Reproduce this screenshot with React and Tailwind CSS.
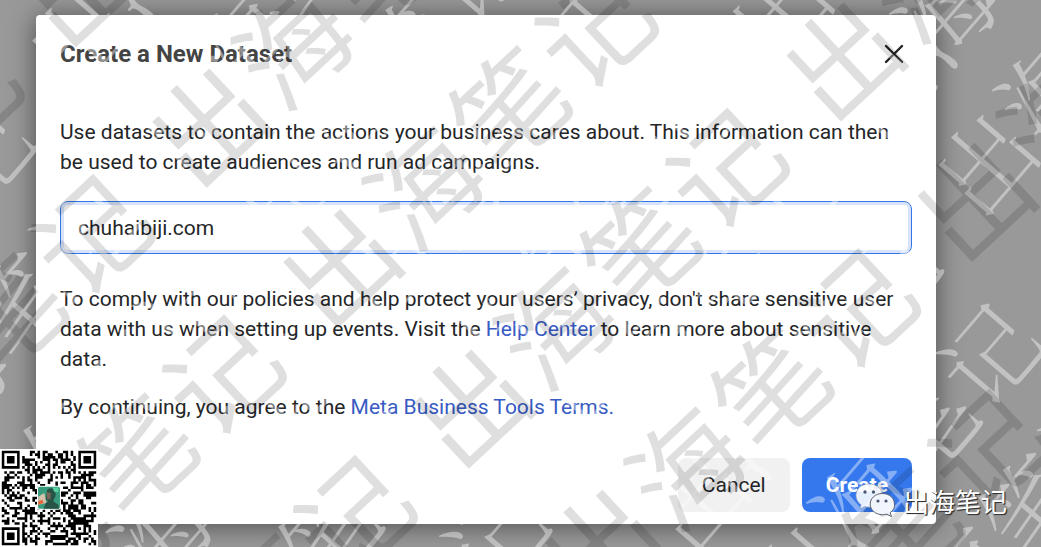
import React from "react";

const MARK = "出海笔记";

function tile(angle, origin, period, row, shift, cols, rows) {
  const rad = (angle * Math.PI) / 180;
  const marks = [];
  for (let r = rows[0]; r <= rows[1]; r++) {
    for (let c = cols[0]; c <= cols[1]; c++) {
      const x = c * period + r * shift;
      const y = r * row;
      const px = origin[0] + x * Math.cos(rad) + y * Math.sin(rad);
      const py = origin[1] - x * Math.sin(rad) + y * Math.cos(rad);
      if (px > -340 && px < 1110 && py > -70 && py < 880) marks.push({ key: r + ":" + c, x, y });
    }
  }
  return { transform: `translate(${origin[0]} ${origin[1]}) rotate(${-angle})`, marks };
}

function glyphStarts(x, step) {
  return [0, 1, 2, 3].map((i) => x + i * step).join(" ");
}

function Watermark() {
  const dark = tile(43, [471, 406], 509, 192, 0, [-2, 2], [-4, 4]);
  const light = tile(49.3, [986, 164], 443, 128, 9, [-4, 2], [-8, 8]);
  return (
    <svg aria-hidden="true" className="pointer-events-none absolute inset-0 h-full w-full select-none">
      <g transform={light.transform} className="fill-white text-[96px] font-light opacity-[0.4] [font-family:'Noto_Serif_CJK_SC','Noto_Sans_CJK_SC',serif]">
        {light.marks.map((m) => (
          <text key={m.key} x={glyphStarts(m.x - 48, 97)} y={m.y + 36}>{MARK}</text>
        ))}
      </g>
      <g transform={dark.transform} className="fill-black text-[111px] opacity-[0.12] [font-family:'Noto_Sans_CJK_SC',sans-serif]">
        {dark.marks.map((m) => (
          <text key={m.key} x={glyphStarts(m.x - 56, 116)} y={m.y + 42}>{MARK}</text>
        ))}
      </g>
    </svg>
  );
}

const N = 37;
function finder(x, y) {
  const d = Math.max(Math.abs(x - 3), Math.abs(y - 3));
  return d === 3 || d <= 1;
}
function isOn(x, y) {
  if (x < 8 && y < 8) return x < 7 && y < 7 && finder(x, y);
  if (x > N - 9 && y < 8) return x > N - 8 && y < 7 && finder(x - N + 7, y);
  if (x < 8 && y > N - 9) return x < 7 && y > N - 8 && finder(x, y - N + 7);
  const a = Math.max(Math.abs(x - 30), Math.abs(y - 30));
  if (a <= 2) return a !== 1;
  if (x === 6 || y === 6) return (x + y) % 2 === 0;
  let h = (x * 374761393 + y * 668265263) | 0;
  h = Math.imul(h ^ (h >>> 13), 1274126177);
  return ((h ^ (h >>> 16)) & 1) === 1;
}

function QrCode() {
  let d = "";
  for (let y = 0; y < N; y++) for (let x = 0; x < N; x++) if (isOn(x, y)) d += `M${x} ${y}h1v1h-1z`;
  return (
    <svg role="img" aria-label="QR code" viewBox="-0.7 -0.7 38.4 38.4" className="absolute bottom-0 left-0 size-[98px] bg-white">
      <path d={d} fill="#000" />
      <rect x="13.8" y="13.7" width="9.4" height="9.4" rx="1" fill="#fff" />
      <rect x="14.2" y="14.1" width="8.6" height="8.6" rx=".7" fill="#399b7d" />
      <path d="M14.3 18l2.3-1.5 1 4-3.3.6z" fill="#d5c2ad" />
      <path d="M14.3 19.8l1.6-.6.5 1.3-2.1.6z" fill="#e5643c" />
      <path d="M17.8 15.2q2-1.2 3.2.3l.1 2.2-1 2 2 1.400.3 1.600h-6l.8-2.200 1-.6-1-.8z" fill="#285447" />
      <path d="M17.500 16.300l1.700.2-.1 2.400-1.300.2z" fill="#7d6659" />
      <path d="M19.800 14.400h2.400v1.700h-1.600z" fill="#55d2a0" />
    </svg>
  );
}

function AccountBadge() {
  return (
    <div className="absolute right-[34px] bottom-[28px] flex items-center gap-2">
      <svg aria-hidden="true" viewBox="0 0 42 36" className="h-9 w-[42px]">
        <g fill="#fff" fillOpacity=".88" stroke="#59606d" strokeWidth="1">
          <path stroke="#8b97b5" strokeWidth=".6" d="M16 1C8.500 1 3 6.200 3 12.500c0 4 2 7 5 9.200L7 26l5-2.500c1.700.5 3 .7 4.500.7 7.500 0 13-5 13-11.500S24 1 16 1z" />
          <path fillOpacity="1" fill="#f2f5fc" d="M29.500 10.500c-7 0-12.300 4.700-12.300 10.600S22.500 31.700 29.500 31.700c1.500 0 3-.2 4.300-.6l4.700 2.500-1.300-4c3-2 4.800-5 4.300-8.500 0-5.900-5-10.600-12-10.600z" />
        </g>
        <g fill="#4b5872">
          <circle cx="12" cy="9" r="1.700" /><circle cx="20.500" cy="9" r="1.700" />
          <circle cx="25" cy="18" r="1.600" /><circle cx="33" cy="18" r="1.600" />
        </g>
      </svg>
      <span className="text-[26px] leading-9 text-white [font-family:'Noto_Sans_CJK_SC',sans-serif] [text-shadow:1px_1px_1px_#333,1px_1px_0_#444]">{MARK}</span>
    </div>
  );
}

export default function App() {
  return (
    <div className="relative min-h-screen overflow-hidden bg-[#999] px-9 pt-[15px] pb-[23px] text-[21px] leading-[30px] text-[#242628] [font-family:Roboto,sans-serif]">
      <section role="dialog" aria-labelledby="title" className="max-w-[900px] rounded-[4px] bg-white px-6 pt-[21px] pb-3 shadow-[0_2px_26px_rgba(0,0,0,0.5)]">
        <header className="flex items-center justify-between">
          <h1 id="title" className="text-[24px] leading-[30px] font-bold text-[#444]">Create a New Dataset</h1>
          <button type="button" aria-label="Close" className="flex size-9 items-center justify-center">
            <svg viewBox="0 0 20 20" className="size-5" fill="none" stroke="#222" strokeWidth="2.400" strokeLinecap="round"><path d="M2 2l16 16M18 2L2 18" /></svg>
          </button>
        </header>
        <p className="mt-[45px]">
          <label htmlFor="dataset-name">Use datasets to contain the actions your business cares about. This information can then be used to create audiences and run ad campaigns.</label>
        </p>
        <input id="dataset-name" defaultValue="chuhaibiji.com" className="mt-6 block h-[53px] w-full rounded-[8px] border border-[#3578e5] bg-white px-[17px] shadow-[inset_0_0_0_3px_#d7e3fa] outline-none" />
        <p className="mt-[30px]">
          To comply with our policies and help protect your users’ privacy, don't share sensitive user data with us when setting up events. Visit the <a href="#help" className="text-[#385bc4]">Help Center</a> to learn more about sensitive data.
        </p>
        <p className="mt-[18px]">
          By continuing, you agree to the <a href="#terms" className="text-[#385bc4]">Meta Business Tools Terms.</a>
        </p>
        <footer className="mt-9 flex justify-end gap-3">
          <button type="button" className="h-[54px] rounded-[8px] bg-[#f1f1f1] px-6">Cancel</button>
          <button type="button" className="h-[54px] rounded-[8px] bg-[#3578ee] px-6 font-bold text-white">Create</button>
        </footer>
      </section>
      <Watermark />
      <QrCode />
      <AccountBadge />
    </div>
  );
}
